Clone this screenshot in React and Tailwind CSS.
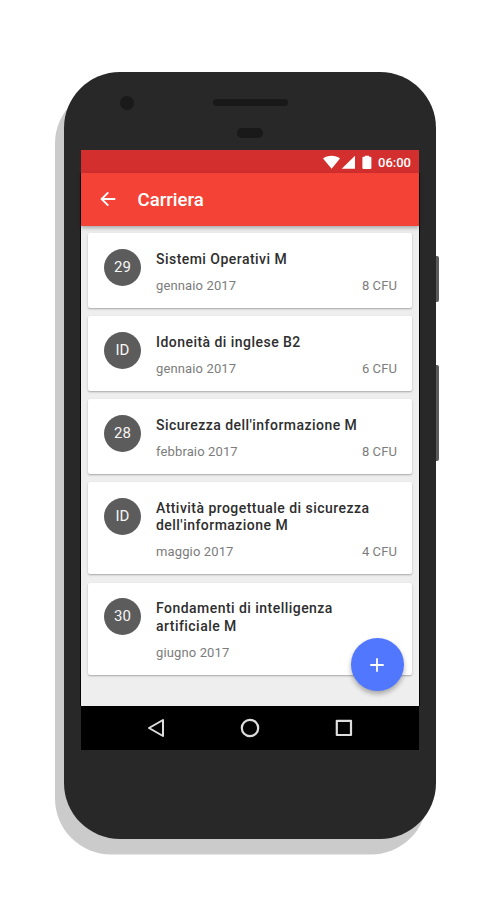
const EXAMS = [
  { grade: "29", title: ["Sistemi Operativi M"], date: "gennaio 2017", credits: 8 },
  { grade: "ID", title: ["Idoneità di inglese B2"], date: "gennaio 2017", credits: 6 },
  { grade: "28", title: ["Sicurezza dell'informazione M"], date: "febbraio 2017", credits: 8 },
  {
    grade: "ID",
    title: ["Attività progettuale di sicurezza", "dell'informazione M"],
    date: "maggio 2017",
    credits: 4,
  },
  {
    grade: "30",
    title: ["Fondamenti di intelligenza", "artificiale M"],
    date: "giugno 2017",
    credits: null, // hidden under the add button
  },
];

function StatusBar() {
  return (
    <div className="flex h-[23px] items-center justify-end bg-[#d32f2f] pr-[8px] text-white">
      <svg className="h-[14px] w-[50px]" viewBox="0 0 50 14" fill="currentColor">
        <path d="M0 3.6C2.3 1.7 5.3 0.8 8.6 0.8s6.1 0.9 8.4 2.8L8.6 13.8Z" />
        <path d="M32 0.8V13.8H18.7Z" />
        <path d="M39.4 2.8a1 1 0 0 1 1-1h1.4V0.8h4.2v1h1.4a1 1 0 0 1 1 1V13a1 1 0 0 1-1 1h-7a1 1 0 0 1-1-1Z" />
      </svg>
      <span className="ml-[5px] pt-px text-[13px] leading-none font-medium">06:00</span>
    </div>
  );
}

function Toolbar() {
  return (
    <div className="relative z-10 flex h-[52.5px] items-center bg-[#f44336] pl-[18.5px] text-white shadow-[0_2px_4px_rgba(0,0,0,0.3)]">
      <svg className="size-[16px]" viewBox="0 0 16 16" fill="none" stroke="currentColor" strokeWidth="1.9">
        <path d="M15.3 8H2M8.3 1.3 1.6 8l6.7 6.7" />
      </svg>
      <h1 className="ml-[22px] pt-[2px] text-[18.6px] leading-none font-medium">Carriera</h1>
    </div>
  );
}

function ExamCard({ exam }) {
  return (
    <li className="flex rounded-[2px] bg-white pt-[15.5px] pr-[15px] pb-[14px] pl-[16px] shadow-[0_1px_2px_rgba(0,0,0,0.3)]">
      <div className="flex size-[37px] shrink-0 items-center justify-center rounded-full bg-[#5c5c5c] text-[15px] text-[#f6f6f6]">
        {exam.grade}
      </div>
      <div className="ml-[15px] flex-1 pt-[2px]">
        <h2 className="text-[14px] leading-[17.6px] font-medium tracking-[0.46px] text-[#2e2e2e]">
          {exam.title.map((line) => (
            <span key={line} className="block whitespace-nowrap">{line}</span>
          ))}
        </h2>
        <div className="mt-[9.5px] flex justify-between text-[13px] leading-[16px] text-[#7c7c7c]">
          <span className="tracking-[0.13px]">{exam.date}</span>
          {exam.credits && <span className="tracking-[0.1px]">{exam.credits} CFU</span>}
        </div>
      </div>
    </li>
  );
}

function NavigationBar() {
  return (
    <div className="flex h-[44px] items-center justify-center gap-[74px] bg-black text-[#dedede]">
      <svg className="size-[20px]" viewBox="0 0 20 20" fill="none" stroke="currentColor" strokeWidth="2" strokeLinejoin="round">
        <path d="M17 2V18L3 10Z" />
      </svg>
      <svg className="size-[20px]" viewBox="0 0 20 20" fill="none" stroke="currentColor" strokeWidth="2.2">
        <circle cx="10" cy="10" r="8.2" />
      </svg>
      <svg className="size-[20px]" viewBox="0 0 20 20" fill="none" stroke="currentColor" strokeWidth="2.2" strokeLinejoin="round">
        <rect x="2.8" y="2.8" width="14.2" height="14.2" />
      </svg>
    </div>
  );
}

export default function App() {
  return (
    <div className="flex h-[900px] w-[499px] items-start bg-white pt-[72px] pl-[64px] font-[Roboto,sans-serif]">
      <div className="relative h-[766.5px] w-[372px] rounded-[56px] bg-[#282828] shadow-[-9px_15.5px_0_#cbcbcb]">
        <div className="absolute top-[184px] left-full h-[46px] w-[3px] rounded-r-[2px] bg-[#5a5a5a]" />
        <div className="absolute top-[293px] left-full h-[96px] w-[3px] rounded-r-[2px] bg-[#5a5a5a]" />

        <div className="grid h-[78px] grid-cols-[1fr_75px_1fr] pt-[24px]">
          <div className="ml-[56px] size-[14px] rounded-full bg-[#1a1a1a]" />
          <div className="flex flex-col items-center pt-[3px]">
            <div className="h-[7px] w-full rounded-full bg-[#191919]" />
            <div className="mt-[22px] h-[10px] w-[26px] rounded-full bg-[#191919]" />
          </div>
        </div>

        <div className="mx-[17px]">
          <StatusBar />
          <div className="relative h-[533px] bg-[#eeeeee] shadow-[-1px_0_0_#050505,1px_0_0_#050505]">
            <Toolbar />
            <ul className="flex flex-col gap-[8.3px] px-[7px] pt-[7.9px]">
              {EXAMS.map((exam) => (
                <ExamCard key={exam.title[0]} exam={exam} />
              ))}
            </ul>
            <button
              aria-label="Aggiungi"
              className="absolute right-[15.5px] bottom-[15px] flex size-[53px] items-center justify-center rounded-full bg-[#5177ff] text-white shadow-[0_3px_5px_rgba(0,0,0,0.3)]"
            >
              <svg className="size-[14px]" viewBox="0 0 14 14" stroke="currentColor" strokeWidth="1.8">
                <path d="M7 0.3V13.7M0.3 7H13.7" />
              </svg>
            </button>
          </div>
          <NavigationBar />
        </div>
      </div>
    </div>
  );
}
